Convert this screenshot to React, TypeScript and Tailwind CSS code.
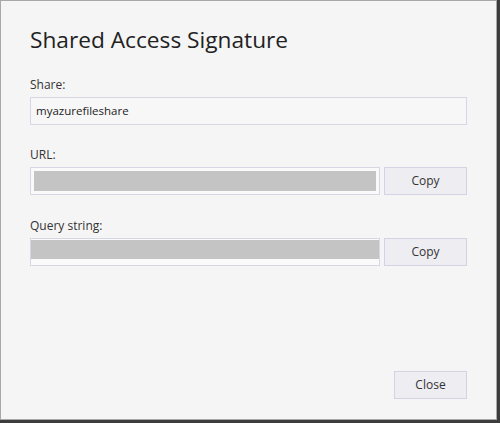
import React from 'react'

const font = { fontFamily: '"Open Sans", "Noto Sans", sans-serif' }

function Label({ children }: { children: React.ReactNode }) {
  return <div className="h-[16px] text-[12px] leading-[16px] text-[#333]">{children}</div>
}

function CopyButton() {
  return (
    <button className="h-[28px] w-[83px] shrink-0 border border-[#d3d3e3] bg-[#ededf2] text-[12px] text-[#333]">
      Copy
    </button>
  )
}

export default function App() {
  return (
    <div className="h-[423px] w-[500px] border-r-[3px] border-b-[3px] border-[#3c3c3c]" style={font}>
      <div className="flex h-full flex-col border border-[#a8a8a8] bg-[#f5f5f5] pl-[29px] pr-[29px]">
        <h1 className="mt-[23px] text-[22.7px] leading-[32px] text-[#222]">Shared Access Signature</h1>

        {/* Share */}
        <div className="mt-[21px]">
          <Label>Share:</Label>
          <div className="mt-[4px] flex h-[28px] items-center border border-[#d6d6e4] bg-[#f7f7f7] px-[5px] text-[11.5px] text-[#222]">
            myazurefileshare
          </div>
        </div>

        {/* URL */}
        <div className="mt-[22px]">
          <Label>URL:</Label>
          <div className="mt-[4px] flex gap-[4px]">
            <div className="h-[28px] w-[350px] border border-[#d6d6e4] bg-[#fafafa] p-[3px]">
              <div className="h-[20px] bg-[#c4c4c4]" />
            </div>
            <CopyButton />
          </div>
        </div>

        {/* Query string */}
        <div className="mt-[23px]">
          <Label>Query string:</Label>
          <div className="mt-[4px] flex gap-[4px]">
            <div className="h-[28px] w-[350px] border border-[#d6d6e4] bg-[#fafafa] pt-[1px]">
              <div className="h-[19px] bg-[#c4c4c4]" />
            </div>
            <CopyButton />
          </div>
        </div>

        <div className="mt-auto mb-[20px] flex justify-end">
          <button className="h-[28px] w-[73px] border border-[#d3d3e3] bg-[#ededf2] text-[12px] text-[#333]">
            Close
          </button>
        </div>
      </div>
    </div>
  )
}
